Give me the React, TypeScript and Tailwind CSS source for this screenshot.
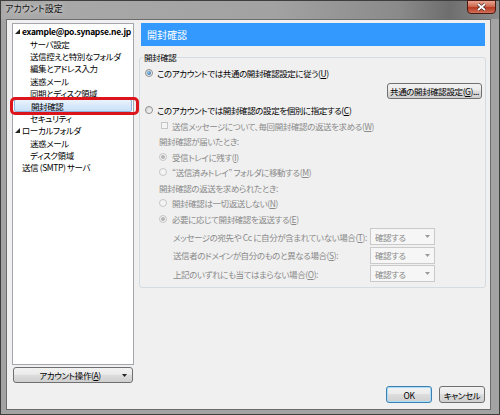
import React from 'react';

const F = "font-['Noto_Sans_CJK_JP',sans-serif] [font-feature-settings:'palt']";

function Radio({ checked, disabled }: { checked?: boolean; disabled?: boolean }) {
  return (
    <span
      className={`flex h-[8px] w-[8px] shrink-0 items-center justify-center rounded-full border ${
        disabled ? 'border-[#c6c6c6] bg-[#f4f4f4]' : 'border-[#8e8f8f] bg-[linear-gradient(135deg,#d4d4d4,#fbfbfb)]'
      }`}
    >
      {checked && (
        <span
          className={`h-[4px] w-[4px] rounded-full ${
            disabled ? 'bg-[#b4b4b4]' : 'bg-[radial-gradient(circle_at_35%_35%,#8fc8f2,#1b5a96)]'
          }`}
        />
      )}
    </span>
  );
}

function Check() {
  return <span className="h-[7px] w-[7px] shrink-0 border border-[#c6c6c6] bg-[#f4f4f4]" />;
}

function Arrow({ color = '#8c8c8c' }: { color?: string }) {
  return (
    <svg width="5" height="3" viewBox="0 0 5 3" className="shrink-0">
      <polygon points="0,0 5,0 2.5,3" fill={color} />
    </svg>
  );
}

function Sel() {
  return (
    <div className="flex h-[17px] w-[65px] shrink-0 items-center border border-[#cacaca] bg-[#f6f6f6] pl-[4px] pr-[4px] text-[#8a8a8a]">
      <span className="flex-1">確認する</span>
      <Arrow color="#9a9a9a" />
    </div>
  );
}

function Tri() {
  return (
    <svg width="5" height="5" viewBox="0 0 5 5" className="shrink-0">
      <polygon points="5,0 5,5 0,5" fill="#222" />
    </svg>
  );
}

type Row = { t: string; level: 0 | 1; tri?: boolean; bold?: boolean; sel?: boolean };
const rows: Row[] = [
  { t: 'example@po.synapse.ne.jp', level: 0, tri: true, bold: true },
  { t: 'サーバ設定', level: 1 },
  { t: '送信控えと特別なフォルダ', level: 1 },
  { t: '編集とアドレス入力', level: 1 },
  { t: '迷惑メール', level: 1 },
  { t: '同期とディスク領域', level: 1 },
  { t: '開封確認', level: 1, sel: true },
  { t: 'セキュリティ', level: 1 },
  { t: 'ローカルフォルダ', level: 0, tri: true },
  { t: '迷惑メール', level: 1 },
  { t: 'ディスク領域', level: 1 },
  { t: '送信 (SMTP) サーバ', level: 0 },
];

const btn =
  'flex items-center justify-center rounded-[3px] border border-[#707070] bg-[linear-gradient(#f2f2f2,#ebebeb_45%,#dddddd_50%,#cfcfcf)] text-[#000]';

export default function App() {
  return (
    <div className={`${F} flex h-[415px] w-[500px] flex-col border border-[#3e3e3e] bg-[#a3a3a3] text-[8.5px] leading-[12px] tracking-[-0.4px] text-black`}>
      {/* title bar */}
      <div className="flex h-[18px] shrink-0 items-start bg-[linear-gradient(90deg,#aaaaaa_0%,#a2a2a2_55%,#8a8a8a_80%,#6e6e6e_90%,#8c8c8c_100%)]">
        <span className="mt-[2px] pl-[4px] text-[9px] leading-[12px] tracking-normal text-[#111] [text-shadow:0_0_4px_#e8e8e8]">アカウント設定</span>
        <div className="ml-auto mr-[3px] mt-[-1px] flex h-[14px] w-[29px] items-center justify-center rounded-b-[4px] border border-[#4a1a12] bg-[linear-gradient(#e9a692,#cf6a52_45%,#b83a22_55%,#d0705a)]">
          <svg width="9" height="8" viewBox="0 0 9 8">
            <path d="M1 1 L8 7 M8 1 L1 7" stroke="#3a1a14" strokeWidth="3" />
            <path d="M1 1 L8 7 M8 1 L1 7" stroke="#ffffff" strokeWidth="1.8" />
          </svg>
        </div>
      </div>

      {/* frame body */}
      <div className="flex flex-1 pb-[4px] pl-[5px] pr-[8px]">
        <div className="flex flex-1 gap-[5px] border border-[#6c6c6c] bg-[#f0f0f0] pb-[6px] pl-[5px] pr-[4px] pt-[3px]">
          {/* left column */}
          <div className="flex w-[122px] shrink-0 flex-col self-start">
            <div className="relative h-[342px] border border-[#a3a6ab] bg-white pt-[1px]">
              {rows.map((r, i) => (
                <div
                  key={i}
                  className={`flex h-[12.4px] items-center whitespace-nowrap ${
                    r.sel
                      ? 'mx-[1px] rounded-[2px] border border-[#8fb4e0] bg-[linear-gradient(#eaf3fd,#c9e0f8)]'
                      : ''
                  } ${r.level === 0 ? 'pl-[2px]' : r.sel ? 'pl-[16px]' : 'pl-[17px]'}`}
                >
                  {r.level === 0 && (
                    <span className="flex w-[7px] shrink-0 items-center">{r.tri && <Tri />}</span>
                  )}
                  <span className={r.bold ? 'font-bold tracking-[-0.3px]' : ''}>{r.t}</span>
                </div>
              ))}
              <div className="absolute left-[-3px] top-[73px] h-[18px] w-[129px] rounded-[5px] border-[3px] border-[#dc151c]" />
            </div>
            <div className={`${btn} mx-[1px] mt-[2px] h-[16px]`}>
              <span className="flex-1 pl-[10px] text-center">
                アカウント操作(<u>A</u>)
              </span>
              <span className="flex w-[16px] justify-center">
                <Arrow color="#222" />
              </span>
            </div>
          </div>

          {/* right column */}
          <div className="flex flex-1 flex-col">
            <div className="ml-[2px] mr-[1px] flex h-[23px] shrink-0 items-center bg-[#3399ff] pl-[6px] text-[10px] tracking-normal text-white">
              開封確認
            </div>

            <fieldset className="mt-[6px] rounded-[3px] border border-[#d3dce2] pb-[5px] pt-[3px]">
              <legend className="ml-[3px] px-[1px] leading-[10px]">開封確認</legend>

              <div className="flex h-[15.5px] items-center gap-[4px] pl-[5px]">
                <Radio checked />
                <span>
                  このアカウントでは共通の開封確認設定に従う(<u>U</u>)
                </span>
              </div>
              <div className="mt-[2.5px] flex justify-end pr-[3px]">
                <div className={`${btn} h-[16px] w-[95px]`}>
                  共通の開封確認設定(<u>G</u>)...
                </div>
              </div>
              <div className="mt-[3.25px] flex h-[15.5px] items-center gap-[4px] pl-[5px]">
                <Radio />
                <span>
                  このアカウントでは開封確認の設定を個別に指定する(<u>C</u>)
                </span>
              </div>

              <div className="flex flex-col pl-[19px] text-[#8a8a8a]">
                <div className="flex h-[15.5px] items-center gap-[4px] pl-[2px]">
                  <Check />
                  <span>
                    送信メッセージについて、毎回開封確認の返送を求める(<u>W</u>)
                  </span>
                </div>
                <div className="flex h-[15.5px] items-center">開封確認が届いたとき:</div>
                <div className="flex h-[15.5px] items-center gap-[5px]">
                  <Radio checked disabled />
                  <span>
                    受信トレイに残す(<u>I</u>)
                  </span>
                </div>
                <div className="flex h-[15.5px] items-center gap-[5px]">
                  <Radio disabled />
                  <span>
                    “送信済みトレイ” フォルダに移動する(<u>M</u>)
                  </span>
                </div>
                <div className="flex h-[15.5px] items-center">開封確認の返送を求められたとき:</div>
                <div className="flex h-[15.5px] items-center gap-[5px]">
                  <Radio disabled />
                  <span>
                    開封確認は一切返送しない(<u>N</u>)
                  </span>
                </div>
                <div className="flex h-[15.5px] items-center gap-[5px]">
                  <Radio checked disabled />
                  <span>
                    必要に応じて開封確認を返送する(<u>E</u>)
                  </span>
                </div>

                <div className="mt-[2px] flex flex-col gap-[1.5px] pl-[14px]">
                  <div className="flex h-[17px] items-center">
                    <span className="w-[197px] shrink-0 whitespace-nowrap">
                      メッセージの宛先や Cc に自分が含まれていない場合(<u>T</u>):
                    </span>
                    <Sel />
                  </div>
                  <div className="flex h-[17px] items-center">
                    <span className="w-[197px] shrink-0 whitespace-nowrap">
                      送信者のドメインが自分のものと異なる場合(<u>S</u>):
                    </span>
                    <Sel />
                  </div>
                  <div className="flex h-[17px] items-center">
                    <span className="w-[197px] shrink-0 whitespace-nowrap">
                      上記のいずれにも当てはまらない場合(<u>O</u>):
                    </span>
                    <Sel />
                  </div>
                </div>
              </div>
            </fieldset>

            <div className="flex-1" />
            <div className="mr-[1px] flex h-[17px] justify-end gap-[7px]">
              <div className="flex h-[17px] w-[46px] items-center justify-center rounded-[3px] border border-[#3c7fb1] bg-[linear-gradient(#f2f2f2,#ebebeb_45%,#dddddd_50%,#cfcfcf)] shadow-[inset_0_0_0_1px_#a8def8]">
                OK
              </div>
              <div className={`${btn} h-[17px] w-[46px]`}>キャンセル</div>
            </div>
          </div>
        </div>
      </div>
    </div>
  );
}
